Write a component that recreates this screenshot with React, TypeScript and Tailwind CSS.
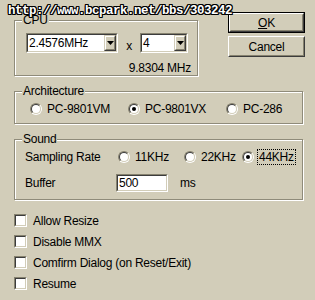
import React from "react";

function Etched({ className, label, children }: { className: string; label: string; children?: React.ReactNode }) {
  return (
    <div className={"relative border border-[#8f8b7a] shadow-[inset_1px_1px_0_#ffffff,1px_1px_0_#ffffff] " + className}>
      <span className="absolute left-[7px] top-[-8px] bg-[#d2cdb9] px-[1px] leading-[14px]">{label}</span>
      {children}
    </div>
  );
}

function Radio({ checked }: { checked?: boolean }) {
  return (
    <div className="w-[12px] h-[12px] shrink-0 rounded-full border border-t-[#86826f] border-l-[#86826f] border-r-white border-b-white">
      <div className="w-full h-full rounded-full border border-t-[#3c3c3c] border-l-[#3c3c3c] border-r-[#d2cdb9] border-b-[#d2cdb9] bg-white flex items-center justify-center">
        {checked ? <div className="w-[4px] h-[4px] rounded-full bg-black" /> : null}
      </div>
    </div>
  );
}

function Check({ label }: { label: string }) {
  return (
    <div className="h-[21px] flex items-center pl-[14px] gap-[6px]">
      <div className="w-[13px] h-[13px] border border-t-[#86826f] border-l-[#86826f] border-r-white border-b-white">
        <div className="w-full h-full border border-t-[#3c3c3c] border-l-[#3c3c3c] border-r-[#d2cdb9] border-b-[#d2cdb9] bg-white" />
      </div>
      <span className="leading-[14px]">{label}</span>
    </div>
  );
}

function Sunken({ className, children }: { className: string; children?: React.ReactNode }) {
  return (
    <div className={"border border-t-[#86826f] border-l-[#86826f] border-r-white border-b-white " + className}>
      <div className="w-full h-full border border-t-[#3c3c3c] border-l-[#3c3c3c] border-r-[#d2cdb9] border-b-[#d2cdb9] bg-white flex items-center">
        {children}
      </div>
    </div>
  );
}

function Combo({ w, text }: { w: string; text: string }) {
  return (
    <Sunken className={w + " h-[20px]"}>
      <span className="flex-1 pl-[1px] leading-[14px]">{text}</span>
      <div className="w-[12px] h-[16px] border border-t-[#d2cdb9] border-l-[#d2cdb9] border-r-[#3c3c3c] border-b-[#3c3c3c]">
        <div className="w-full h-full border border-t-white border-l-white border-r-[#86826f] border-b-[#86826f] bg-[#d2cdb9] flex items-center justify-center">
          <svg width="7" height="4" viewBox="0 0 7 4"><path d="M0 0H7L3.5 4Z" fill="#000" /></svg>
        </div>
      </div>
    </Sunken>
  );
}

function Btn({ children, def }: { children: React.ReactNode; def?: boolean }) {
  const inner = (
    <div className="w-full h-full border border-t-white border-l-white border-r-[#3c3c3c] border-b-[#3c3c3c]">
      <div className="w-full h-full border border-t-[#d2cdb9] border-l-[#d2cdb9] border-r-[#86826f] border-b-[#86826f] flex items-center justify-center leading-[14px]">
        {children}
      </div>
    </div>
  );
  return def ? (
    <div className="w-[77px] h-[21px] border border-black">{inner}</div>
  ) : (
    <div className="w-[77px] h-[21px]">{inner}</div>
  );
}

export default function App() {
  return (
    <div
      className="relative w-[315px] h-[300px] overflow-hidden bg-[#d2cdb9] text-black text-[12px] tracking-[-0.25px]"
      style={{ fontFamily: '"Liberation Sans", Arial, sans-serif' }}
    >
      <div className="flex items-start">
        <Etched className="mt-[20px] ml-[14px] w-[184px] h-[56px]" label="CPU">
          <div className="flex pl-[11px] pt-[12px]">
            <Combo w="w-[92px]" text="2.4576MHz" />
            <span className="w-[22px] text-center pt-[6px] leading-[14px]">x</span>
            <Combo w="w-[48px]" text="4" />
          </div>
          <div className="flex justify-end pr-[6px] mt-[8px] leading-[14px]">9.8304 MHz</div>
        </Etched>
        <div className="mt-[12px] ml-[30px] flex flex-col gap-[3px]">
          <Btn def>
            <span><span className="underline">O</span>K</span>
          </Btn>
          <Btn>Cancel</Btn>
        </div>
      </div>

      <Etched className="mt-[15px] ml-[14px] w-[289px] h-[33px]" label="Architecture">
        <div className="flex pl-[15px] pt-[10px]">
          <div className="w-[98px] h-[14px] flex items-center gap-[5px]"><Radio /><span>PC-9801VM</span></div>
          <div className="w-[98px] h-[14px] flex items-center gap-[5px]"><Radio checked /><span>PC-9801VX</span></div>
          <div className="h-[14px] flex items-center gap-[5px]"><Radio /><span>PC-286</span></div>
        </div>
      </Etched>

      <Etched className="mt-[15px] ml-[14px] w-[289px] h-[61px]" label="Sound">
        <div className="flex items-center pl-[10px] pt-[9px] h-[25px]">
          <span className="w-[93px]">Sampling Rate</span>
          <div className="w-[66px] flex items-center gap-[3px]"><Radio /><span className="border border-transparent px-[1px] leading-[14px]">11KHz</span></div>
          <div className="w-[58px] flex items-center gap-[3px]"><Radio /><span className="border border-transparent px-[1px] leading-[14px]">22KHz</span></div>
          <div className="flex items-center gap-[3px]"><Radio checked /><span className="border border-dotted border-black px-[1px] leading-[14px]">44KHz</span></div>
        </div>
        <div className="flex items-center pl-[10px] mt-[8px] h-[20px]">
          <span className="w-[91px]">Buffer</span>
          <Sunken className="w-[52px] h-[18px]"><span className="pl-[1px] leading-[14px]">500</span></Sunken>
          <span className="ml-[12px]">ms</span>
        </div>
      </Etched>

      <div className="mt-[10px] flex flex-col">
        <Check label="Allow Resize" />
        <Check label="Disable MMX" />
        <Check label="Comfirm Dialog (on Reset/Exit)" />
        <Check label="Resume" />
      </div>

      <div
        className="absolute left-[8px] top-[4px] text-white font-bold text-[12.5px] leading-[15px] tracking-[-0.5px] whitespace-nowrap"
        style={{
          fontFamily: '"Liberation Mono", "DejaVu Sans Mono", monospace',
          textShadow:
            "1px 0 0 #000, -1px 0 0 #000, 0 1px 0 #000, 0 -1px 0 #000, 1px 1px 0 #000, -1px -1px 0 #000, 1px -1px 0 #000, -1px 1px 0 #000",
        }}
      >
        http://www.bcpark.net/bbs/303242
      </div>
    </div>
  );
}
